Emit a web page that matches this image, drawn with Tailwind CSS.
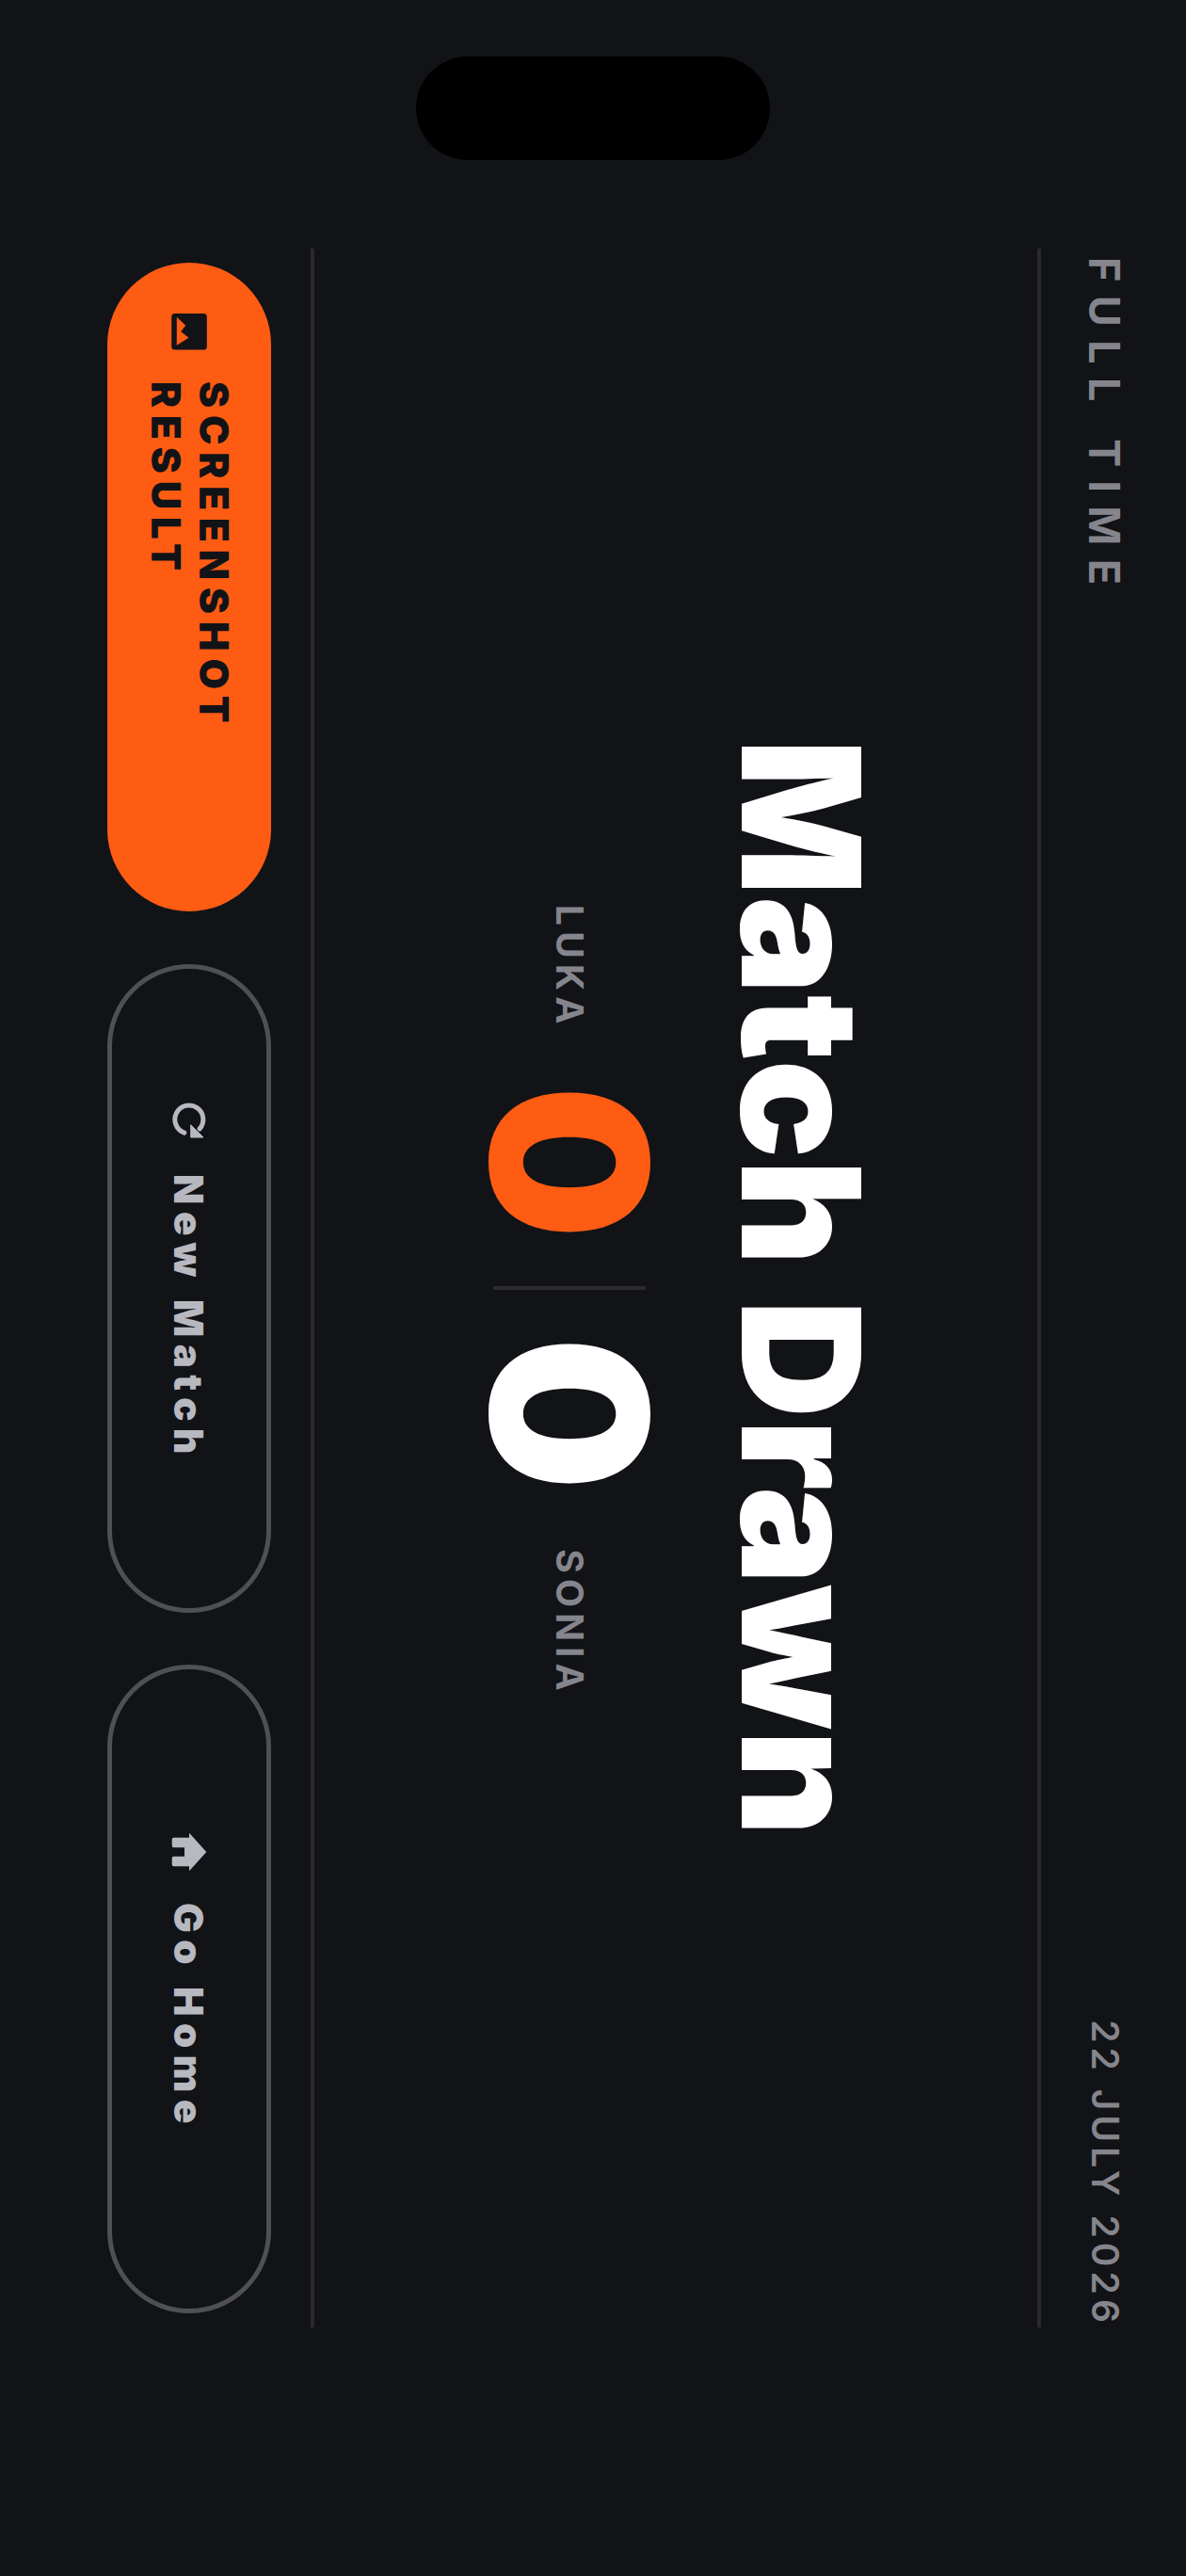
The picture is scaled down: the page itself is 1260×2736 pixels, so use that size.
<!DOCTYPE html>
<html lang="en">
<head>
    <meta charset="UTF-8">
    <meta name="viewport" content="width=device-width, initial-scale=1.0">
    <title>Full Time</title>
    <script src="https://cdn.jsdelivr.net/npm/@tailwindcss/browser@4"></script>
</head>
<body class="bg-[#121317] font-['Inter',sans-serif]">
    <div class="relative w-[1260px] h-[2736px] overflow-hidden">
        <!-- Notch stays upright, the rest of the screen is turned a quarter -->
        <div class="absolute left-[442px] top-[60px] w-[376px] h-[110px] rounded-full bg-black"></div>

        <div class="ml-[1260px] w-[2736px] h-[1260px] origin-top-left rotate-90 flex flex-col px-[264px]">
            <!-- Header -->
            <header class="h-[158px] pt-[19px] pl-[9px] flex items-center justify-between border-b-[4.5px] border-[#2a2a2e] text-[#85858d]">
                <span class="text-[45px] font-bold tracking-[0.32em]">FULL TIME</span>
                <span class="text-[39px] font-semibold tracking-[0.13em]">22 JULY 2026</span>
            </header>

            <!-- Result -->
            <main class="flex-1 pt-[8px] flex flex-col items-center justify-center">
                <h1 class="text-[174px] leading-none font-black tracking-[0.005em] text-white">Match Drawn</h1>
                <div class="mt-[44px] w-full grid grid-cols-[1fr_auto_1fr] items-center">
                    <span class="justify-self-end mr-[59px] text-[39px] font-bold tracking-[0.16em] text-[#85858d]">LUKA</span>
                    <div class="flex items-center gap-[49.5px]">
                        <span class="text-[230px] leading-none font-black text-[#ff5c13]">0</span>
                        <div class="w-[4.5px] h-[162px] bg-[#2a2a2e]"></div>
                        <span class="text-[230px] leading-none font-black text-white">0</span>
                    </div>
                    <span class="ml-[62px] text-[39px] font-bold tracking-[0.16em] text-[#85858d]">SONIA</span>
                </div>
            </main>

            <!-- Actions -->
            <footer class="pt-[42px] pb-[114px] px-[15px] grid grid-cols-3 gap-[55.5px] border-t-[4.5px] border-[#2a2a2e]">
                <button class="h-[174px] px-[51px] rounded-full bg-[#ff5c13] text-[#121317] flex items-center justify-center gap-[33px]">
                    <svg class="w-[42px] h-[42px] shrink-0 overflow-visible" viewBox="0 0 42 42">
                        <g transform="rotate(-90 21 21) translate(0 1.3)">
                            <rect x="2.2" y="1.8" width="37.6" height="38.4" rx="3.5" fill="#121317"/>
                            <path d="M7.8 5.5 L17.2 14.5 L12.2 21 L20.5 27.5 L7.8 35.5 Z" fill="#ff5c13"/>
                        </g>
                    </svg>
                    <span class="pb-[3px] text-left text-[42px] leading-[51px] font-black tracking-[0.19em]">SCREENSHOT RESULT</span>
                </button>
                <button class="h-[174px] px-[51px] rounded-full border-[5px] border-[#4f5054] text-[#b8b8c0] flex items-center justify-center gap-[37px]">
                    <svg class="w-[42px] h-[42px] shrink-0 overflow-visible" viewBox="0 0 42 42">
                        <g transform="rotate(-90 21 21)">
                            <path d="M15.8 35.1 A15 15 0 1 1 32 31" fill="none" stroke="#b8b8c0" stroke-width="5" stroke-linecap="round"/>
                            <path d="M22.7 26.7 V40 H36 Z" fill="#b8b8c0" stroke="#b8b8c0" stroke-width="1" stroke-linejoin="round"/>
                        </g>
                    </svg>
                    <span class="pr-[16px] text-[42px] font-black tracking-[0.18em]">New Match</span>
                </button>
                <button class="h-[174px] px-[51px] rounded-full border-[5px] border-[#4f5054] text-[#b8b8c0] flex items-center justify-center gap-[33px]">
                    <svg class="w-[42px] h-[42px] shrink-0 overflow-visible" viewBox="0 0 42 42">
                        <g transform="rotate(-90 21 21)">
                            <path d="M39.3 21 L21 .7 V5.7 H4.7 a2 2 0 0 0 -2 2 V14.3 a2 2 0 0 0 2 2 H16 V25.7 H4.7 a2 2 0 0 0 -2 2 V34.3 a2 2 0 0 0 2 2 H21 V41.3 Z" fill="#b8b8c0"/>
                        </g>
                    </svg>
                    <span class="pr-[16px] text-[42px] font-black tracking-[0.18em]">Go Home</span>
                </button>
            </footer>
        </div>
    </div>
</body>
</html>
